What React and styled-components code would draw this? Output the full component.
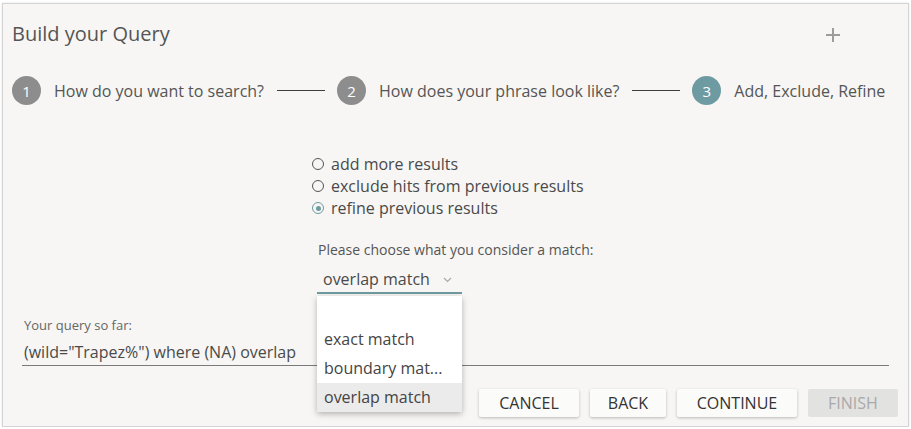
import styled, { createGlobalStyle } from "styled-components";

const GlobalStyle = createGlobalStyle`
  html, body {
    margin: 0;
    padding: 0;
    background: #ffffff;
  }
  body {
    font-family: "Open Sans", "Liberation Sans", sans-serif;
    color: #525252;
  }
`;

const steps = [
  { n: 1, label: "How do you want to search?" },
  { n: 2, label: "How does your phrase look like?" },
  { n: 3, label: "Add, Exclude, Refine", active: true },
];

const modes = [
  { label: "add more results" },
  { label: "exclude hits from previous results" },
  { label: "refine previous results", checked: true },
];

const matchOptions = ["", "exact match", "boundary mat...", "overlap match"];

function Chevron() {
  return (
    <svg width="9" height="6" viewBox="0 0 9 6">
      <path d="M1 1 L4.5 4.5 L8 1" fill="none" stroke="#a8a8a8" strokeWidth="1.2" />
    </svg>
  );
}

function PlusIcon() {
  return (
    <svg width="16" height="16" viewBox="0 0 16 16">
      <path d="M8 1 V15 M1 8 H15" stroke="#9c9c9c" strokeWidth="2" />
    </svg>
  );
}

function App() {
  return (
    <>
      <GlobalStyle />
      <Card>
        <Header>
          <Title>Build your Query</Title>
          <AddButton><PlusIcon /></AddButton>
        </Header>

        <Stepper>
          {steps.map((s, i) => (
            <Step key={s.n}>
              {i > 0 && <Connector />}
              <StepCircle $active={s.active}>{s.n}</StepCircle>
              <StepLabel>{s.label}</StepLabel>
            </Step>
          ))}
        </Stepper>

        <Options>
          <RadioGroup>
            {modes.map((m) => (
              <RadioRow key={m.label}>
                <Radio $checked={m.checked} />
                {m.label}
              </RadioRow>
            ))}
          </RadioGroup>
          <MatchLabel>Please choose what you consider a match:</MatchLabel>
          <SelectWrap>
            <Select>
              overlap match
              <Chevron />
            </Select>
            <Menu>
              {matchOptions.map((o, i) => (
                <MenuItem key={i} $selected={o === "overlap match"}>{o}</MenuItem>
              ))}
            </Menu>
          </SelectWrap>
        </Options>

        <QueryField>
          <QueryLabel>Your query so far:</QueryLabel>
          <QueryText>(wild="Trapez%") where (NA) overlap</QueryText>
        </QueryField>

        <Actions>
          <Button $w={100}>Cancel</Button>
          <Button $w={76}>Back</Button>
          <Button $w={120}>Continue</Button>
          <Button $w={90} disabled>Finish</Button>
        </Actions>
      </Card>
    </>
  );
}

const Card = styled.div`
  box-sizing: border-box;
  width: 907px;
  height: 424px;
  margin: 3px 0 0 2px;
  border: 1px solid #d4d4d4;
  box-shadow: 0 0 2px rgba(0, 0, 0, 0.12);
  background: #f7f6f4;
  display: flex;
  flex-direction: column;
`;

const Header = styled.div`
  display: flex;
  align-items: center;
  justify-content: space-between;
  padding: 17px 67px 0 9px;
`;

const Title = styled.h1`
  margin: 0;
  font-size: 20px;
  line-height: 26px;
  font-weight: 400;
  color: #555;
`;

const AddButton = styled.div`
  display: flex;
  margin-top: 1px;
`;

const Stepper = styled.div`
  display: flex;
  align-items: center;
  margin-top: 29px;
  padding-left: 9px;
`;

const Step = styled.div`
  display: flex;
  align-items: center;
`;

const Connector = styled.div`
  width: 48px;
  height: 1px;
  background: #3e3e3e;
  margin: 0 12px 0 13px;
`;

const StepCircle = styled.div`
  width: 29px;
  height: 29px;
  border-radius: 50%;
  background: ${(p) => (p.$active ? "#6e9ba1" : "#8d8d8d")};
  color: #fff;
  font-size: 15px;
  display: flex;
  align-items: center;
  justify-content: center;
`;

const StepLabel = styled.span`
  margin-left: 13px;
  font-size: 16px;
  line-height: 28px;
  color: #555;
`;

const Options = styled.div`
  display: flex;
  flex-direction: column;
  align-items: flex-start;
  margin: 48px 0 0 309px;
`;

const RadioGroup = styled.div`
  display: flex;
  flex-direction: column;
`;

const RadioRow = styled.label`
  display: flex;
  align-items: center;
  gap: 7px;
  font-size: 16px;
  line-height: 22px;
  color: #4a4a4a;
`;

const Radio = styled.span`
  box-sizing: border-box;
  width: 12px;
  height: 12px;
  border-radius: 50%;
  border: 1.5px solid ${(p) => (p.$checked ? "#6e9ba1" : "#555")};
  display: flex;
  align-items: center;
  justify-content: center;
  &::after {
    content: "";
    width: 5px;
    height: 5px;
    border-radius: 50%;
    background: ${(p) => (p.$checked ? "#6e9ba1" : "transparent")};
  }
`;

const MatchLabel = styled.div`
  margin: 22px 0 0 6px;
  font-size: 14px;
  line-height: 18px;
  color: #555;
`;

const SelectWrap = styled.div`
  position: relative;
  margin: 9px 0 0 5px;
  width: 145px;
`;

const Select = styled.div`
  box-sizing: border-box;
  height: 26px;
  padding: 0 0 2px 6px;
  display: flex;
  align-items: center;
  white-space: nowrap;
  font-size: 16px;
  color: #4a4a4a;
  border-bottom: 2px solid #6e9ba1;
  svg {
    margin-left: 13px;
    margin-top: 2px;
  }
`;

const Menu = styled.div`
  position: absolute;
  top: 28px;
  left: 0;
  width: 145px;
  background: #fff;
  box-shadow: 0 2px 6px rgba(0, 0, 0, 0.28);
  z-index: 2;
`;

const MenuItem = styled.div`
  height: 29px;
  line-height: 29px;
  padding-left: 7px;
  font-size: 16px;
  white-space: nowrap;
  color: #444;
  background: ${(p) => (p.$selected ? "#ebebeb" : "#fff")};
`;

const QueryField = styled.div`
  margin: 23px 19px 0 19px;
  display: flex;
  flex-direction: column;
`;

const QueryLabel = styled.div`
  padding-left: 2px;
  font-size: 13px;
  line-height: 16px;
  color: #666;
`;

const QueryText = styled.div`
  margin-top: 8px;
  padding: 0 0 2px 2px;
  font-size: 16px;
  line-height: 22px;
  color: #4a4a4a;
  border-bottom: 1px solid #7a7a7a;
`;

const Actions = styled.div`
  display: flex;
  justify-content: flex-end;
  gap: 11px;
  margin-top: 23px;
  padding-right: 10px;
`;

const Button = styled.button`
  box-sizing: border-box;
  width: ${(p) => p.$w}px;
  height: 28px;
  border: none;
  border-radius: 2px;
  font-family: "Open Sans", "Liberation Sans", sans-serif;
  font-size: 16px;
  text-transform: uppercase;
  color: #333;
  background: #fbfbfa;
  box-shadow: 0 1px 3px rgba(0, 0, 0, 0.25);
  &:disabled {
    background: #e2e2e1;
    color: #a9a9a9;
    box-shadow: none;
  }
`;

export default App;
